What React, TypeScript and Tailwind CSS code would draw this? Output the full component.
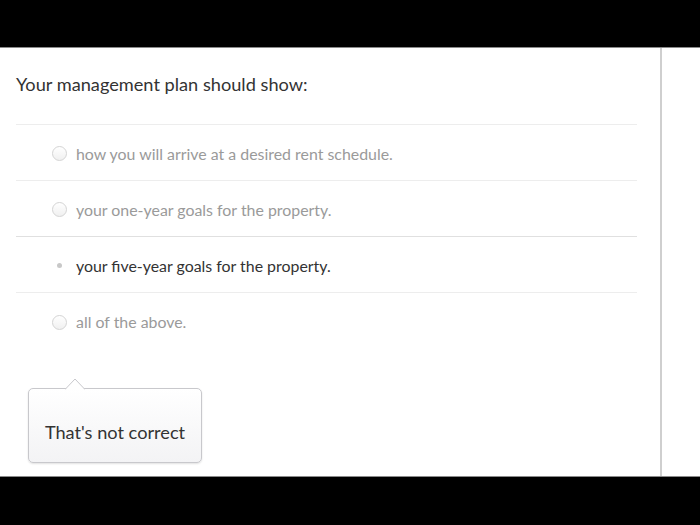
import React from "react";

const options = [
  { label: "how you will arrive at a desired rent schedule.", selected: false },
  { label: "your one-year goals for the property.", selected: false },
  { label: "your five-year goals for the property.", selected: true },
  { label: "all of the above.", selected: false },
];

export default function App() {
  return (
    <div
      className="flex h-[525px] w-[700px] flex-col overflow-hidden bg-black"
      style={{ fontFamily: "Lato, 'Open Sans', sans-serif" }}
    >
      {/* top bar */}
      <div className="h-[48px] shrink-0 border-b border-[#8a8a8a] bg-black" />

      <div className="flex min-h-0 flex-1 bg-white">
        <div className="w-[662px] shrink-0 border-r-2 border-[#cfcfcf] pl-4 pr-[23px]">
          <h1 className="pt-[24px] text-[18.2px] leading-[24px] text-[#333]">
            Your management plan should show:
          </h1>

          <div className="mt-[28px] border-t border-[#ededed]">
            {options.map((o, i) => (
              <div
                key={i}
                className={[
                  "flex h-[56px] items-center gap-[9px] pl-[36px] pt-[2px]",
                  i < options.length - 1 ? "border-b" : "",
                  i === 1 ? "border-[#e0e0e0]" : "border-[#ededed]",
                ].join(" ")}
              >
                <div className="flex h-[15px] w-[15px] items-center justify-center">
                  {o.selected ? (
                    <span className="h-[5px] w-[5px] rounded-full bg-[#c8c8c8]" />
                  ) : (
                    <span className="h-[15px] w-[15px] rounded-full border border-[#d4d4d4] bg-gradient-to-b from-white to-[#f0f0f0]" />
                  )}
                </div>
                <span
                  className={[
                    "text-[15.9px]",
                    o.selected ? "text-[#333]" : "text-[#9a9a9a]",
                  ].join(" ")}
                >
                  {o.label}
                </span>
              </div>
            ))}
          </div>

          {/* feedback tooltip */}
          <div className="relative ml-[12px] mt-[39px] flex h-[75px] w-[174px] items-center justify-center rounded-[5px] border border-[#c8c8cc] bg-gradient-to-b from-white to-[#f3f3f5] pt-[14px] shadow-[0_1px_2px_rgba(0,0,0,0.12)]">
            <svg
              className="absolute -top-[11px] left-[36px]"
              width="20"
              height="12"
              viewBox="0 0 20 12"
            >
              <path d="M0 11.5 L10 1 L20 11.5" fill="white" stroke="#c8c8cc" strokeWidth="1" />
            </svg>
            <span className="text-[18.2px] text-[#333]">That's not correct</span>
          </div>
        </div>
        <div className="flex-1" />
      </div>

      {/* bottom bar */}
      <div className="h-[49px] shrink-0 border-t border-[#8a8a8a] bg-black" />
    </div>
  );
}
